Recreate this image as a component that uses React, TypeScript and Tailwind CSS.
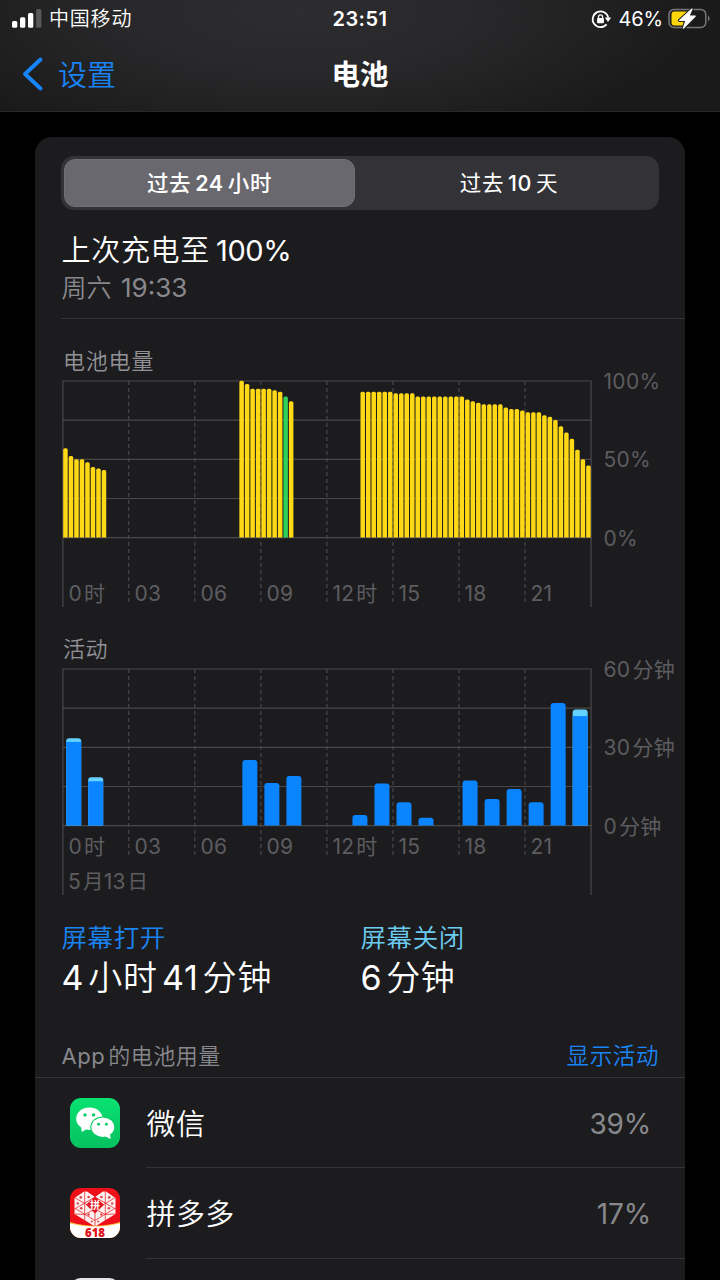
import type { ReactNode } from "react";

const LEVELS: Record<number, number> = {};
[57, 52, 50, 50, 48, 45, 44, 43].forEach((v, i) => (LEVELS[i] = v));
[100, 98, 95, 95, 95, 95, 94, 93, 90, 87].forEach((v, i) => (LEVELS[32 + i] = v));
[
  93, 93, 93, 93, 93, 93, 92, 92, 92, 92, 90, 90, 90, 90, 90, 90, 90, 90, 90, 88, 87, 86, 85, 85, 85, 85, 83, 82,
  82, 81, 80, 80, 80, 78, 77, 75, 71, 67, 63, 56, 50, 46,
].forEach((v, i) => (LEVELS[54 + i] = v));
const CHARGING_SLOT = 40;

// hour, total bar height, height of the screen-off part
const ACTIVITY: [number, number, number][] = [
  [0, 87.2, 3.6],
  [1, 48.2, 4],
  [8, 65.5, 0],
  [9, 42.4, 0],
  [10, 49.5, 0],
  [13, 10.5, 0],
  [14, 42, 0],
  [15, 23.2, 0],
  [16, 7.8, 0],
  [18, 45, 0],
  [19, 26.5, 0],
  [20, 36.6, 0],
  [21, 23.2, 0],
  [22, 122.5, 0],
  [23, 116, 6.6],
];

const HOURS = [<>0<i className="ml-[2px] text-[21px] not-italic">时</i></>, "03", "06", "09", <>12<i className="ml-[2px] text-[21px] not-italic">时</i></>, "15", "18", "21"];

function Grid({ dashEnd, sideEnd }: { dashEnd: number; sideEnd: number }) {
  return (
    <g stroke="#48484b" strokeWidth="1.2">
      {[0, 39.2, 78.4, 117.5, 156.7].map((y) => (
        <line key={y} x1="0.5" x2="529.5" y1={y + 1} y2={y + 1} />
      ))}
      <line x1="0.9" x2="0.9" y1="1" y2={sideEnd} />
      <line x1="529.1" x2="529.1" y1="1" y2={sideEnd} />
      {[1, 2, 3, 4, 5, 6, 7].map((n) => (
        <line key={n} x1={0.7 + n * 66.05} x2={0.7 + n * 66.05} y1="1" y2={dashEnd} strokeDasharray="4 3" />
      ))}
    </g>
  );
}

function topRounded(x: number, y: number, w: number, h: number, r: number) {
  return `M${x} ${y + h}V${y + r}q0 ${-r} ${r} ${-r}h${w - 2 * r}q${r} 0 ${r} ${r}V${y + h}z`;
}

function Hours() {
  return (
    <div className="flex w-[529px] pl-[6.5px] text-[21px] leading-[26px] tracking-[0.2px] text-[#5c5c60]">
      {HOURS.map((h, i) => (
        <span key={i} className="w-[66px] shrink-0 whitespace-nowrap">
          {h}
        </span>
      ))}
    </div>
  );
}

function ScaleLabels({ children }: { children: ReactNode }) {
  return (
    <div className="-mt-[11.5px] ml-[11.5px] flex h-[183px] flex-col justify-between whitespace-nowrap text-[21px] leading-[26px] tracking-[0.3px] text-[#5c5c60]">
      {children}
    </div>
  );
}

function Minutes({ n }: { n: number }) {
  return (
    <span>
      {n}
      <i className="ml-[2px] text-[21px] not-italic">分钟</i>
    </span>
  );
}

function WeChatIcon() {
  return (
    <svg viewBox="0 0 50 50" className="size-[50px]">
      <defs>
        <linearGradient id="wc" x1="0" y1="0" x2="0" y2="1">
          <stop offset="0" stopColor="#09e272" />
          <stop offset="1" stopColor="#06c160" />
        </linearGradient>
      </defs>
      <rect width="50" height="50" rx="11" fill="url(#wc)" />
      <path d="M11 28.5L11.8 34L17.5 30.5z" fill="#fff" />
      <ellipse cx="19.4" cy="20.7" rx="13.2" ry="11.2" fill="#fff" />
      <circle cx="15" cy="16.9" r="1.7" fill="#07ca64" />
      <circle cx="23.6" cy="16.9" r="1.7" fill="#07ca64" />
      <ellipse cx="32.8" cy="29.2" rx="12.5" ry="10.8" fill="#07ca64" />
      <ellipse cx="32.8" cy="29.2" rx="11.4" ry="9.7" fill="#fff" />
      <path d="M34.5 38L40.6 41L40 36z" fill="#fff" />
      <circle cx="28.6" cy="26.3" r="1.45" fill="#07ca64" />
      <circle cx="36.4" cy="26.3" r="1.45" fill="#07ca64" />
    </svg>
  );
}

function PinduoduoIcon() {
  return (
    <svg viewBox="0 0 50 50" className="size-[50px] overflow-visible">
      <defs>
        <clipPath id="pc">
          <rect width="50" height="50" rx="11" />
        </clipPath>
      </defs>
      <g clipPath="url(#pc)">
        <rect width="50" height="50" fill="#ee1018" />
        <path d="M0 34Q25 41.5 50 34V50H0z" fill="#fbc04d" />
        <path d="M0 35.5Q25 42 50 35.5V50H0z" fill="#fff" />
        <path d="M4.5 10L14 3.6H17L25 9L33 3.6H36L45.5 10V26L25 38.6L4.5 26z" fill="#fdf0ef" />
        <g stroke="#e5222a" strokeWidth="0.75" fill="none">
          <path d="M14.7 3V33M35.3 3V33M4.5 9.5L25 21.5L45.5 9.5M25 9L4.5 21M25 9L45.5 21M4.5 20L25 32.5L45.5 20M14.7 26.5L25 21M35.3 26.5L25 21M4.5 26L14.7 26.5M45.5 26L35.3 26.5M25 25V38" />
        </g>
        <g fill="#d9464c">
          <circle cx="10.8" cy="9.4" r="1.3" />
          <circle cx="18.6" cy="9" r="1.3" />
          <circle cx="31.4" cy="9" r="1.3" />
          <circle cx="39.2" cy="9.4" r="1.3" />
          <circle cx="7.8" cy="15.4" r="1.2" />
          <circle cx="42.2" cy="15.4" r="1.2" />
          <circle cx="11.2" cy="20.3" r="1.3" />
          <circle cx="38.8" cy="20.3" r="1.3" />
          <circle cx="18.6" cy="26.5" r="1.2" />
          <circle cx="31.4" cy="26.5" r="1.2" />
          <circle cx="21.8" cy="33.4" r="1" />
          <circle cx="28.2" cy="33.4" r="1" />
        </g>
        <path d="M25 8.5L34 16.8L25 25.5L16 16.8z" fill="#e3151d" />
      </g>
      <text x="25" y="20.8" textAnchor="middle" fontSize="10" fontWeight="700" fill="#fff" className="font-['Noto_Sans_CJK_SC',sans-serif]">
        拼
      </text>
      <text x="25" y="49" textAnchor="middle" fontSize="12" fontWeight="800" fill="#e0121b" textLength="20" lengthAdjust="spacingAndGlyphs" className="font-['Open_Sans',sans-serif]">
        618
      </text>
    </svg>
  );
}

function AppRow({ icon, name, value }: { icon: ReactNode; name: string; value: string }) {
  return (
    <div className="flex h-[90.3px] shrink-0 pl-[35px]">
      <div className="pt-[19.5px]">{icon}</div>
      <div className="ml-[26px] flex flex-1 items-center justify-between border-b border-[#343437] pt-[2px] pr-[34px]">
        <span className="pt-[1px] pl-[0.5px] text-[29px] font-[350] tracking-[0.4px] text-white">{name}</span>
        <span className="text-[28px] tracking-[-0.2px] text-[#88888d]">{value}</span>
      </div>
    </div>
  );
}

export default function App() {
  return (
    <div className="flex h-[1280px] w-[720px] flex-col overflow-hidden bg-black font-['Inter','Noto_Sans_CJK_SC',sans-serif] leading-none">
      <header className="h-[112px] shrink-0 border-b border-[#2a2a2b] bg-[radial-gradient(ellipse_400px_140px_at_300px_10px,#2d2d2f_0%,#28282a_45%,#1a1a1b_100%)]">
        <div className="grid h-[37px] grid-cols-3 items-center text-white">
          <div className="flex items-center pl-[12px]">
            <svg viewBox="0 0 30 19" className="h-[19px] w-[30px]">
              <rect x="0" y="12" width="5.3" height="6.7" rx="1.5" fill="#fff" />
              <rect x="8" y="8.2" width="5.3" height="10.5" rx="1.5" fill="#fff" />
              <rect x="16" y="4" width="5.3" height="14.7" rx="1.5" fill="#fff" />
              <rect x="24.1" y="0" width="5.3" height="18.7" rx="1.5" fill="#58585a" />
            </svg>
            <span className="ml-[7px] pt-[1px] text-[20px] font-[350] tracking-[0.8px]">中国移动</span>
          </div>
          <span className="text-center text-[20px] font-semibold tracking-[0.5px]">23:51</span>
          <div className="flex items-center justify-end pr-[9px]">
            <svg viewBox="0 0 20 20" className="size-[20px]" fill="none" stroke="#fff" strokeWidth="1.7">
              <path d="M17.3 8.6A7.9 7.9 0 1 0 15.6 15.4" />
              <path d="M13.8 8.6H20.2L17 13z" fill="#fff" stroke="none" />
              <rect x="6.1" y="9" width="6.8" height="5.2" rx="0.8" fill="#fff" stroke="none" />
              <path d="M7.5 9.4V7.8a2 2 0 0 1 4 0V9.4" strokeWidth="1.3" />
            </svg>
            <span className="ml-[7.5px] w-[45.5px] text-[20px] tracking-[-0.1px]">46%</span>
            <svg viewBox="0 0 43 24" className="ml-[4px] h-[24px] w-[43px]">
              <rect x="1" y="2.4" width="36.8" height="18" rx="5" fill="none" stroke="#77777a" strokeWidth="1.5" />
              <path d="M40 8.4q3.4 3 0 6.2z" fill="#77777a" />
              <path d="M6.5 4.6H20L15 18.4H6.5a3 3 0 0 1-3-3V7.6a3 3 0 0 1 3-3z" fill="#ffd60a" />
              <path d="M24 2L11.6 13.4H18L15.4 21.2L27.2 9.2H20.8z" fill="none" stroke="#252527" strokeWidth="3.4" strokeLinejoin="round" />
              <path d="M24 2L11.6 13.4H18L15.4 21.2L27.2 9.2H20.8z" fill="#fff" stroke="#fff" strokeWidth="1.2" strokeLinejoin="round" />
            </svg>
          </div>
        </div>
        <div className="grid h-[75px] grid-cols-3 items-center">
          <div className="flex items-center pl-[22px] text-[#1a84f5]">
            <svg viewBox="0 0 22 34" className="-mt-[1px] h-[34px] w-[22px]" fill="none" stroke="#1684fa" strokeWidth="3.8" strokeLinecap="round" strokeLinejoin="round">
              <path d="M18.5 2.5L3 17L18.5 31.5" />
            </svg>
            <span className="ml-[14px] pt-[1px] text-[29px] font-[350]">设置</span>
          </div>
          <h1 className="pt-[2px] text-center text-[28.5px] font-bold text-white">电池</h1>
        </div>
      </header>

      <main className="mt-[25px] ml-[35px] flex w-[650px] flex-1 flex-col overflow-hidden rounded-t-[17px] bg-[#1c1c1e]">
        <div className="mt-[19px] ml-[26px] flex h-[54px] w-[598px] shrink-0 rounded-[13px] bg-[#323237] p-[3px] text-[21.5px] tracking-[0.6px] text-white">
          <div className="flex w-[291px] items-center justify-center rounded-[11px] border border-[#717076] bg-[#69686e] pt-[2px] font-medium">
            过去<span className="mx-[4px] font-semibold">24</span>小时
          </div>
          <div className="flex flex-1 items-center justify-center pt-[2px] pl-[7px]">
            过去<span className="mx-[4px] font-medium">10</span>天
          </div>
        </div>

        <div className="ml-[26px] flex h-[109px] shrink-0 flex-col border-b border-[#343437] pt-[22px]">
          <div className="flex h-[36px] items-center pl-[0.5px] text-[29px] font-[350] tracking-[0.7px] text-white">
            上次充电至<span className="ml-[6px] text-[29px] font-normal tracking-[-0.4px]">100%</span>
          </div>
          <div className="mt-[1px] flex h-[38px] items-center pl-[0.5px] text-[25px] font-[350] text-[#88888d]">
            周六<span className="ml-[9.5px] text-[26px] font-normal">19:33</span>
          </div>
        </div>

        <div className="mt-[29px] ml-[28px] flex h-[26px] shrink-0 items-center text-[22px] font-[350] tracking-[0.8px] text-[#929297]">电池电量</div>
        <section className="mt-[6px] ml-[27px] flex h-[228px] shrink-0">
          <div className="grid h-[228px] w-[530px]">
            <svg viewBox="0 0 530 228" className="col-start-1 row-start-1 h-[228px] w-[530px]">
              <Grid dashEnd={225} sideEnd={227} />
              {Object.entries(LEVELS).map(([slot, v]) => {
                const n = Number(slot);
                const h = v * 1.567;
                return <path key={slot} d={topRounded(1.2 + n * 5.505, 157.5 - h, 4.5, h, 1.6)} fill={n === CHARGING_SLOT ? "#30d158" : "#ffd816"} />;
              })}
            </svg>
            <div className="col-start-1 row-start-1 pt-[201px]">
              <Hours />
            </div>
          </div>
          <ScaleLabels>
            <span>100%</span>
            <span>50%</span>
            <span>0%</span>
          </ScaleLabels>
        </section>

        <div className="mt-[28px] ml-[28px] flex h-[26px] shrink-0 items-center text-[22px] font-[350] tracking-[0.6px] text-[#929297]">活动</div>
        <section className="mt-[6px] ml-[27px] flex h-[228px] shrink-0">
          <div className="grid h-[228px] w-[530px]">
            <svg viewBox="0 0 530 228" className="col-start-1 row-start-1 h-[228px] w-[530px]">
              <Grid dashEnd={190} sideEnd={227} />
              {ACTIVITY.map(([hour, h, off]) => (
                <g key={hour}>
                  <path d={topRounded(4.2 + hour * 22.02, 157.5 - h, 15, h, 3)} fill={off ? "#64d2ff" : "#0a84ff"} />
                  {off > 0 && <rect x={4.2 + hour * 22.02} y={157.5 - h + off} width="15" height={h - off} fill="#0a84ff" />}
                </g>
              ))}
            </svg>
            <div className="col-start-1 row-start-1 pt-[166px]">
              <Hours />
              <div className="mt-[9px] pl-[6px] text-[21px] leading-[26px] tracking-[0.2px] text-[#5c5c60]">
                5<span className="ml-[2px] text-[20.5px]">月</span>13<span className="ml-[2px] text-[20.5px]">日</span>
              </div>
            </div>
          </div>
          <ScaleLabels>
            <Minutes n={60} />
            <Minutes n={30} />
            <Minutes n={0} />
          </ScaleLabels>
        </section>

        <div className="mt-[25px] ml-[26px] flex shrink-0">
          <div className="w-[299px] pl-[0.5px]">
            <div className="flex h-[34px] items-center text-[25.5px] font-[350] tracking-[0.6px] text-[#1a84f5]">屏幕打开</div>
            <div className="mt-[2px] flex h-[42px] items-center text-[34px] font-[350] tracking-[0.8px] text-white">
              <span className="font-normal">4</span>
              <span className="mx-[4px]">小时</span>
              <span className="font-normal">41</span>
              <span className="ml-[4px]">分钟</span>
            </div>
          </div>
          <div className="pl-[0.5px]">
            <div className="flex h-[34px] items-center text-[25.5px] font-[350] tracking-[0.6px] text-[#6ccbf0]">屏幕关闭</div>
            <div className="mt-[2px] flex h-[42px] items-center text-[34px] font-[350] tracking-[0.6px] text-white">
              <span className="font-normal">6</span>
              <span className="ml-[4px]">分钟</span>
            </div>
          </div>
        </div>

        <div className="mt-[34px] flex h-[45px] shrink-0 items-center justify-between border-b border-[#343437] pt-[2px] pr-[26px] pl-[26.5px] text-[22px]">
          <span className="tracking-[0.5px] text-[#88888d]">
            App<i className="ml-[3px] font-[350] not-italic">的电池用量</i>
          </span>
          <span className="text-[22.5px] font-[350] tracking-[0.6px] text-[#1a84f5]">显示活动</span>
        </div>
        <AppRow icon={<WeChatIcon />} name="微信" value="39%" />
        <AppRow icon={<PinduoduoIcon />} name="拼多多" value="17%" />
        <div className="mt-[19.5px] ml-[35px] h-[50px] w-[50px] shrink-0 rounded-[11px] bg-[#e5e5e8]" />
      </main>
    </div>
  );
}
